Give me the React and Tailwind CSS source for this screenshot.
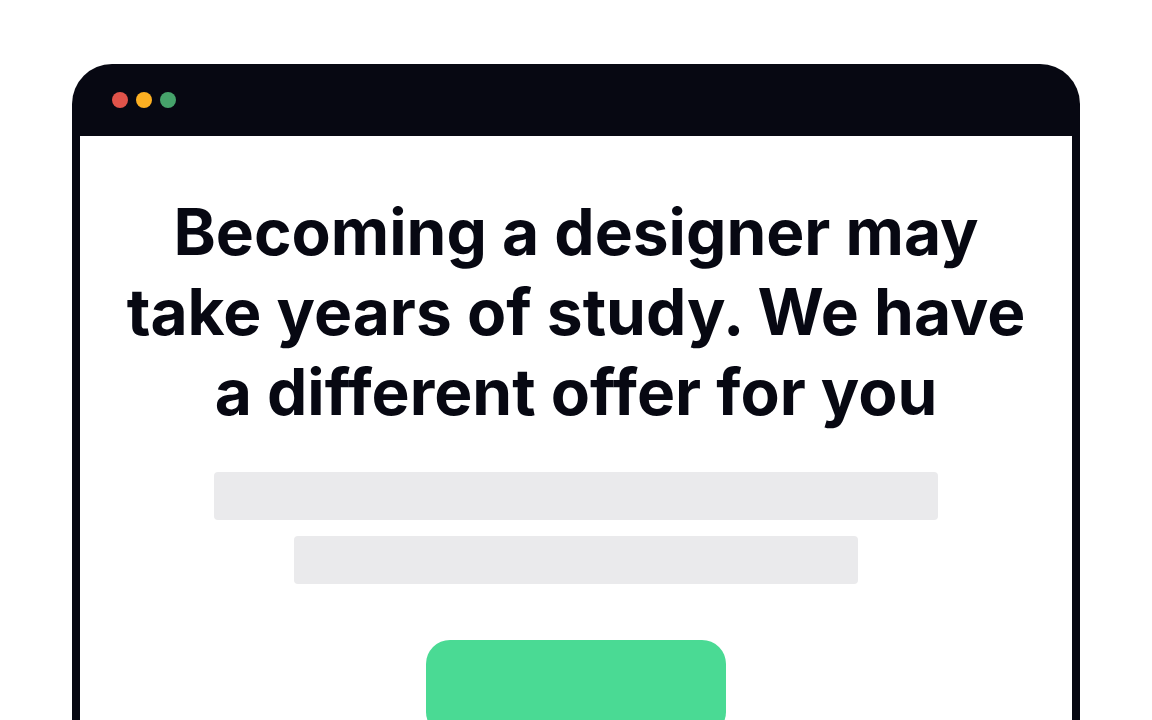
import React from 'react';

const App = () => {
  return (
    <div className="w-[1152px] h-[720px] overflow-hidden bg-white pt-16 px-[72px]" style={{ fontFamily: 'Inter, "Noto Sans", sans-serif' }}>
      {/* Browser window */}
      <div className="h-[700px] rounded-t-[40px] bg-[#070812] px-2 flex flex-col">
        {/* Title bar */}
        <div className="h-[72px] flex items-center gap-2 pl-8 shrink-0">
          <span className="w-4 h-4 rounded-full bg-[#e0534a]" />
          <span className="w-4 h-4 rounded-full bg-[#fdb022]" />
          <span className="w-4 h-4 rounded-full bg-[#46a36b]" />
        </div>

        {/* Content */}
        <div className="flex-1 bg-white flex flex-col items-center pt-14">
          <h1 className="text-[64px] leading-[80px] font-bold text-[#070812] text-center w-[920px]">
            Becoming a designer may take years of study. We have a different offer for you
          </h1>
          <div className="mt-10 w-[724px] h-12 rounded bg-[#eaeaec]" />
          <div className="mt-4 w-[564px] h-12 rounded bg-[#eaeaec]" />
          <button className="mt-14 w-[300px] h-24 shrink-0 rounded-3xl bg-[#4ada94]" />
        </div>
      </div>
    </div>
  );
};

export default App;
